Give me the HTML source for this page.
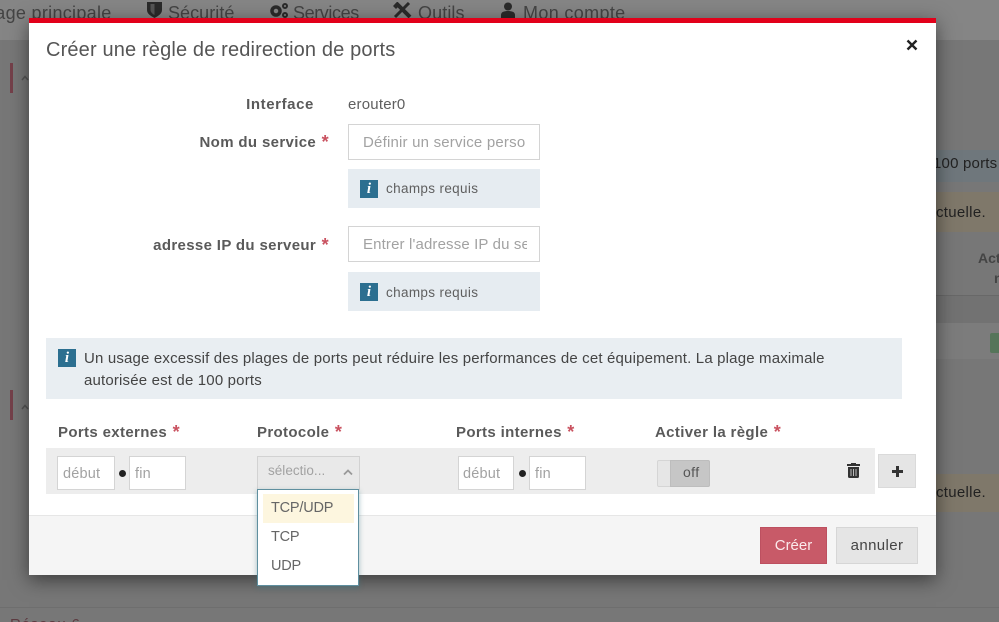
<!DOCTYPE html>
<html lang="fr"><head><meta charset="utf-8"><title>Créer une règle</title>
<style>
html,body{margin:0;padding:0;width:999px;height:622px;overflow:hidden;background:#777;font-family:"Liberation Sans",sans-serif;color:#555}
#p{position:relative;width:999px;height:622px;overflow:hidden}
.a{position:absolute;white-space:nowrap}
.box{position:absolute;box-sizing:border-box}
.b{font-weight:bold;color:#5a5a5a;font-size:15px;letter-spacing:.35px}
.r{color:#c9515f;font-weight:bold;font-size:18px;line-height:0;margin-left:1px;position:relative;top:1px}
.ph{color:#a2a2a2}
.inp{position:absolute;box-sizing:border-box;background:#fff;border:1px solid #d4d4d4}
.i{position:absolute;width:18px;height:18px;background:#2c6f90;color:#fff;font:italic bold 15px/18px "Liberation Serif",serif;text-align:center}
.n{font-size:18px;color:#444;top:3px}
</style></head><body><div id="p">
<div class="box" style="left:0;top:0;width:999px;height:40px;background:#858585"></div>
<div class="box" style="left:0;top:40px;width:999px;height:582px;background:#777"></div>
<div class="a n" style="left:-17px;letter-spacing:.3px">Page principale</div>
<svg class="a" style="left:147px;top:1px" width="15" height="17" viewBox="0 0 15 17"><path d="M0 1h15v8c0 4-4 6-7.500 8C4 15 0 13 0 9z" fill="#2a2a2a"/><path d="M7.500 3v11c-2-1-4-3-4-5V3z" fill="#555"/></svg>
<div class="a n" style="left:168px;letter-spacing:.05px">Sécurité</div>
<svg class="a" style="left:269px;top:2px" width="20" height="16" viewBox="0 0 20 16"><circle cx="7" cy="9" r="4" fill="none" stroke="#2a2a2a" stroke-width="3.500"/><circle cx="16" cy="4" r="2" fill="none" stroke="#2a2a2a" stroke-width="2"/><circle cx="16" cy="13" r="2" fill="none" stroke="#2a2a2a" stroke-width="2"/></svg>
<div class="a n" style="left:293px;letter-spacing:-.4px">Services</div>
<svg class="a" style="left:393px;top:2px" width="19" height="17" viewBox="0 0 19 17"><path d="M3 1l14 14" stroke="#2a2a2a" stroke-width="4"/><path d="M16 1l-14 14" stroke="#2a2a2a" stroke-width="3"/><path d="M0 4l4-4 3 3-4 4z" fill="#2a2a2a"/></svg>
<div class="a n" style="left:418px;letter-spacing:.1px">Outils</div>
<svg class="a" style="left:500px;top:2px" width="16" height="16" viewBox="0 0 16 16"><circle cx="8" cy="4.500" r="4" fill="#2a2a2a"/><path d="M1 16v-3c0-3 3-4 7-4s7 1 7 4v3z" fill="#2a2a2a"/></svg>
<div class="a n" style="left:523px;letter-spacing:.35px">Mon compte</div>

<div class="box" style="left:10px;top:63px;width:3px;height:30px;background:#74404a"></div>
<svg class="a" style="left:21px;top:75px" width="8" height="6" viewBox="0 0 8 6"><path d="M1 5l3-3.500 3 3.500" fill="none" stroke="#555" stroke-width="1.500"/></svg>
<div class="box" style="left:10px;top:390px;width:3px;height:30px;background:#74404a"></div>
<svg class="a" style="left:21px;top:404px" width="8" height="6" viewBox="0 0 8 6"><path d="M1 5l3-3.500 3 3.500" fill="none" stroke="#555" stroke-width="1.500"/></svg>

<div class="box" style="left:936px;top:150px;width:63px;height:32px;background:#6f777c"></div>
<div class="a" style="left:933px;top:155px;font-size:15px;color:#222;letter-spacing:.2px">100 ports</div>
<div class="box" style="left:936px;top:192px;width:63px;height:40px;background:#7f786a"></div>
<div class="a" style="left:936px;top:204px;font-size:15px;color:#222;letter-spacing:.3px">ctuelle.</div>
<div class="a" style="left:978px;top:250px;font-size:14px;font-weight:bold;color:#444">Act</div>
<div class="a" style="left:994px;top:270px;font-size:14px;font-weight:bold;color:#444">n</div>
<div class="box" style="left:936px;top:295px;width:63px;height:1px;background:#686868"></div>
<div class="box" style="left:936px;top:296px;width:63px;height:27px;background:#727272"></div>
<div class="box" style="left:936px;top:323px;width:63px;height:36px;background:#7c7c7c"></div>
<div class="box" style="left:990px;top:333px;width:9px;height:20px;background:#56755a;border-radius:2px 0 0 2px"></div>
<div class="box" style="left:936px;top:474px;width:63px;height:38px;background:#7f786a"></div>
<div class="a" style="left:936px;top:484px;font-size:15px;color:#222;letter-spacing:.3px">ctuelle.</div>
<div class="box" style="left:0;top:607px;width:999px;height:1px;background:#6e6e6e"></div>
<div class="a" style="left:10px;top:616px;font-size:15px;color:#5c3a40;letter-spacing:.8px">Réseau 6</div>

<div class="box" style="left:29px;top:18px;width:907px;height:557px;background:#fff;border-top:5px solid #e2001a;box-shadow:0 5px 18px rgba(0,0,0,.5)"></div>
<div class="a" style="left:46px;top:39px;font-size:20px;color:#555;letter-spacing:.15px">Créer une règle de redirection de ports</div>
<svg class="a" style="left:906px;top:39px" width="12" height="12" viewBox="0 0 12 12"><path d="M1.500 1.500l9 9M10.500 1.500l-9 9" stroke="#222" stroke-width="2.400"/></svg>

<div class="a b" style="right:685px;top:96px;letter-spacing:.6px">Interface</div>
<div class="a" style="left:348px;top:96px;font-size:15px;color:#5f5f5f;letter-spacing:.2px">erouter0</div>
<div class="a b" style="right:670px;top:134px">Nom du service <span class="r">*</span></div>
<div class="inp" style="left:348px;top:124px;width:192px;height:36px"></div>
<div class="a ph" style="left:363px;top:134px;font-size:15px;letter-spacing:.2px;width:164px;overflow:hidden">Définir un service perso</div>
<div class="box" style="left:348px;top:169px;width:192px;height:39px;background:#e6ecf1"></div>
<div class="i" style="left:360px;top:180px">i</div>
<div class="a" style="left:386px;top:181px;font-size:13.500px;color:#5f5f5f;letter-spacing:.35px">champs requis</div>

<div class="a b" style="right:670px;top:237px">adresse IP du serveur <span class="r">*</span></div>
<div class="inp" style="left:348px;top:226px;width:192px;height:36px"></div>
<div class="a ph" style="left:363px;top:236px;font-size:15px;letter-spacing:.14px;width:164px;overflow:hidden">Entrer l'adresse IP du serveur</div>
<div class="box" style="left:348px;top:272px;width:192px;height:39px;background:#e6ecf1"></div>
<div class="i" style="left:360px;top:283px">i</div>
<div class="a" style="left:386px;top:285px;font-size:13.500px;color:#5f5f5f;letter-spacing:.35px">champs requis</div>

<div class="box" style="left:46px;top:338px;width:856px;height:61px;background:#e9eef2"></div>
<div class="i" style="left:58px;top:349px">i</div>
<div class="a" style="left:84px;top:348px;font-size:15px;line-height:21.500px;color:#444;letter-spacing:.17px">Un usage excessif des plages de ports peut réduire les performances de cet équipement. La plage maximale<br>autorisée est de 100 ports</div>

<div class="a b" style="left:58px;top:424px">Ports externes <span class="r">*</span></div>
<div class="a b" style="left:257px;top:424px">Protocole <span class="r">*</span></div>
<div class="a b" style="left:456px;top:424px">Ports internes <span class="r">*</span></div>
<div class="a b" style="left:655px;top:424px">Activer la règle <span class="r">*</span></div>

<div class="box" style="left:46px;top:448px;width:829px;height:46px;background:#ededed"></div>
<div class="inp" style="left:57px;top:456px;width:58px;height:34px"></div>
<div class="a ph" style="left:63px;top:466px;font-size:14.500px;letter-spacing:.2px">début</div>
<div class="box" style="left:119px;top:470px;width:7px;height:7px;border-radius:50%;background:#222"></div>
<div class="inp" style="left:129px;top:456px;width:57px;height:34px"></div>
<div class="a ph" style="left:135px;top:466px;font-size:14.500px;letter-spacing:.2px">fin</div>

<div class="box" style="left:257px;top:456px;width:103px;height:34px;background:#e9e9e9;border:1px solid #d2d2d2"></div>
<div class="a ph" style="left:268px;top:463px;font-size:13.500px;letter-spacing:.02px">sélectio...</div>
<svg class="a" style="left:343px;top:469px" width="10" height="7" viewBox="0 0 10 7"><path d="M1 5.500l4-4 4 4" fill="none" stroke="#999" stroke-width="1.800"/></svg>

<div class="inp" style="left:458px;top:456px;width:56px;height:34px"></div>
<div class="a ph" style="left:463px;top:466px;font-size:14.500px;letter-spacing:.2px">début</div>
<div class="box" style="left:519px;top:470px;width:7px;height:7px;border-radius:50%;background:#222"></div>
<div class="inp" style="left:529px;top:456px;width:57px;height:34px"></div>
<div class="a ph" style="left:535px;top:466px;font-size:14.500px;letter-spacing:.2px">fin</div>

<div class="box" style="left:657px;top:460px;width:53px;height:27px;background:#e6e6e6;border:1px solid #d5d5d5;border-radius:2px"></div>
<div class="box" style="left:670px;top:460px;width:40px;height:27px;background:#c6c6c6;border:1px solid #bdbdbd;border-radius:0 2px 2px 0"></div>
<div class="a" style="left:683px;top:464px;font-size:14px;color:#555;letter-spacing:.4px">off</div>

<svg class="a" style="left:846px;top:462px" width="15" height="16" viewBox="0 0 15 16"><path d="M5 2V1h5v1h4v2H1V2z" fill="#333"/><path d="M2 5h11v9.500c0 1-.5 1.500-1.500 1.500h-8C2.500 16 2 15.500 2 14.500z" fill="#333"/><path d="M5 7v7M7.500 7v7M10 7v7" stroke="#bbb" stroke-width="1"/></svg>
<div class="box" style="left:878px;top:454px;width:38px;height:34px;background:#e5e5e5;border:1px solid #dadada"></div>
<svg class="a" style="left:892px;top:466px" width="11" height="11" viewBox="0 0 11 11"><path d="M5.500 0v11M0 5.500h11" stroke="#333" stroke-width="3"/></svg>

<div class="box" style="left:29px;top:515px;width:907px;height:60px;background:#f5f5f5;border-top:1px solid #e6e6e6"></div>
<div class="box" style="left:760px;top:527px;width:67px;height:37px;background:#c85a68;border:1px solid #bd5060"></div>
<div class="a" style="left:760px;top:537px;width:67px;text-align:center;font-size:15px;color:#fbeaec">Créer</div>
<div class="box" style="left:836px;top:527px;width:82px;height:37px;background:#e5e5e5;border:1px solid #d6d6d6"></div>
<div class="a" style="left:836px;top:537px;width:82px;text-align:center;font-size:15px;color:#444;letter-spacing:.4px">annuler</div>

<div class="box" style="left:257px;top:489px;width:102px;height:97px;background:#fff;border:1px solid #5f8f9f;box-shadow:0 2px 5px rgba(60,120,130,.45)"></div>
<div class="box" style="left:263px;top:494px;width:91px;height:29px;background:#fdf6df"></div>
<div class="a" style="left:271px;top:500px;font-size:14.500px;letter-spacing:-.2px;color:#666">TCP/UDP</div>
<div class="a" style="left:271px;top:529px;font-size:14.500px;letter-spacing:-.2px;color:#666">TCP</div>
<div class="a" style="left:271px;top:558px;font-size:14.500px;letter-spacing:-.2px;color:#666">UDP</div>
</div></body></html>
